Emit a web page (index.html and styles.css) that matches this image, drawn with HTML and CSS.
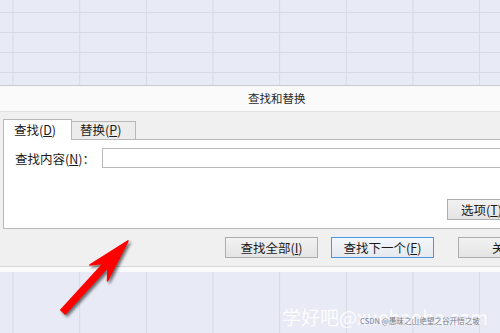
FILE: index.html
```html
<!DOCTYPE html>
<html lang="zh">
<head>
<meta charset="utf-8">
<link rel="stylesheet" href="styles.css">
</head>
<body>
<div class="sheet-top"></div>
<div class="dialog">
  <div class="titlebar">查找和替换</div>
  <div class="dlg-body">
    <div class="tabs">
      <div class="tab active">查找(<u>D</u>)</div>
      <div class="tab">替换(<u>P</u>)</div>
    </div>
    <div class="panel">
      <div class="find-row">
        <span class="label">查找内容(<u>N</u>)：</span>
        <div class="input"></div>
      </div>
      <div class="opt-row">
        <div class="btn opt">选项(<u>T</u>) &gt;&gt;</div>
      </div>
    </div>
    <div class="btn-row">
      <div class="btn all">查找全部(<u>I</u>)</div>
      <div class="btn next">查找下一个(<u>F</u>)</div>
      <div class="btn close">关闭</div>
    </div>
  </div>
  <div class="dlg-edge"></div>
</div>
<div class="sheet-bottom"></div>
<svg class="arrow" width="500" height="333" viewBox="0 0 500 333">
  <polygon points="128,241 90,265 103.5,263.3 60.8,310 65.2,314 107.9,267.3 107.5,281" fill="#ff0000" stroke="#ff0000" stroke-width="1.5" stroke-linejoin="round"/>
</svg>
<div class="wm">学好吧@xuehaoba.com</div>
<div class="csdn">CSDN @愚昧之山绝望之谷开悟之坡</div>
</body>
</html>
```
FILE: styles.css
```css
html, body {
  margin: 0;
  padding: 0;
  width: 500px;
  height: 333px;
  overflow: hidden;
}
body {
  font-family: "Noto Sans CJK SC", "Noto Sans", sans-serif;
  font-size: 12px;
  color: #1b1b1b;
  background-color: #e8eaf5;
  background-image: linear-gradient(to right, #d7d9e6 0, #d7d9e6 1px, transparent 1px);
  background-size: 66.67px 100%;
  background-position: 12.5px 0;
  position: relative;
}
u { text-decoration: underline; text-underline-offset: 1px; }

.sheet-top {
  height: 85px;
  background-image: linear-gradient(to bottom, #d7d9e6 0, #d7d9e6 1px, transparent 1px);
  background-size: 100% 20px;
  background-position: 0 12px;
}

.dialog {
  width: 600px;
  background: #f0f0f0;
  border-top: 1px solid #c9c9cc;
}
.titlebar {
  height: 25px;
  line-height: 25px;
  background: #fafafa;
  border-bottom: 1px solid #e1e1e1;
  padding-left: 248px;
  font-size: 11.5px;
  color: #2a2a2a;
}
.dlg-body {
  padding: 7px 0 8px 3px;
}
.tabs {
  display: flex;
  align-items: flex-end;
  height: 20px;
  position: relative;
  z-index: 1;
}
.tab {
  box-sizing: border-box;
  height: 18px;
  line-height: 16px;
  width: 64px;
  padding-left: 8px;
  border: 1px solid #b8b8b8;
  border-left: none;
  border-bottom: none;
  background: #ececec;
  font-size: 12.5px;
}
.tab.active {
  height: 21px;
  width: 69px;
  line-height: 19px;
  padding-left: 10px;
  border-left: 1px solid #b8b8b8;
  background: #fff;
  margin-bottom: -1px;
}
.panel {
  box-sizing: border-box;
  height: 90px;
  background: #fff;
  border: 1px solid #b8b8b8;
  padding: 8px 0 0 11px;
}
.find-row {
  display: flex;
  align-items: center;
}
.label {
  width: 87px;
  font-size: 12.5px;
}
.input {
  flex: 1;
  height: 18px;
  border: 1px solid #b8b8b8;
  background: #fff;
}
.opt-row {
  padding-left: 432px;
  margin-top: 31px;
}
.btn {
  box-sizing: border-box;
  height: 21px;
  line-height: 19px;
  border: 1px solid #adadad;
  background: linear-gradient(#f2f2f2, #e4e4e4);
  text-align: center;
  font-size: 12.5px;
  white-space: nowrap;
}
.opt {
  width: 90px;
  text-align: left;
  padding-left: 13px;
}
.btn-row {
  display: flex;
  padding-left: 222px;
  margin-top: 8px;
}
.all { width: 93px; }
.next {
  width: 103px;
  margin-left: 13px;
  border-color: #4a97e6;
  background: linear-gradient(#f3f6fa, #e6e9ee);
}
.close {
  width: 93px;
  margin-left: 24px;
}
.dlg-edge {
  height: 5px;
  background: #fbfbfb;
  border-top: 1px solid #d6d6d6;
}

.arrow {
  position: absolute;
  left: 0;
  top: 0;
  filter: drop-shadow(2px 2px 1.5px rgba(0,0,0,0.55));
}
.wm {
  position: absolute;
  left: 282px;
  top: 304px;
  font-family: "Noto Sans CJK SC", "Noto Sans", sans-serif;
  font-size: 19px;
  line-height: 26px;
  color: rgba(255,255,255,0.9);
  white-space: nowrap;
}
.csdn {
  position: absolute;
  left: 360px;
  top: 315px;
  font-size: 7.6px;
  line-height: 11px;
  color: #7d7f8c;
  white-space: nowrap;
}
```
